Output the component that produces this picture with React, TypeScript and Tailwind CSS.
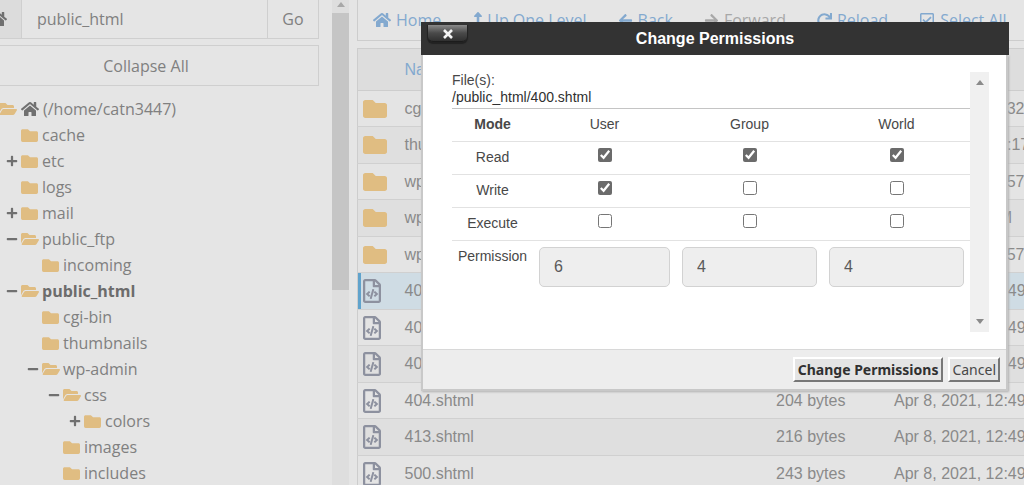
import { FaFolder, FaFolderOpen, FaHome, FaLevelUpAlt, FaArrowLeft, FaArrowRight, FaRedo, FaRegCheckSquare, FaRegFileCode, FaPlus, FaMinus } from "react-icons/fa";
import type { ReactNode } from "react";

const sans = "font-['Open_Sans',sans-serif]";
const arial = "font-['Liberation_Sans',sans-serif]";

type Node = { name: string; pad: string; open?: boolean; sign?: "+" | "-"; bold?: boolean };

const tree: Node[] = [
  { name: "cache", pad: "pl-[6px]" },
  { name: "etc", pad: "pl-[6px]", sign: "+" },
  { name: "logs", pad: "pl-[6px]" },
  { name: "mail", pad: "pl-[6px]", sign: "+" },
  { name: "public_ftp", pad: "pl-[6px]", sign: "-", open: true },
  { name: "incoming", pad: "pl-[27px]" },
  { name: "public_html", pad: "pl-[6px]", sign: "-", open: true, bold: true },
  { name: "cgi-bin", pad: "pl-[27px]" },
  { name: "thumbnails", pad: "pl-[27px]" },
  { name: "wp-admin", pad: "pl-[27px]", sign: "-", open: true },
  { name: "css", pad: "pl-[48px]", sign: "-", open: true },
  { name: "colors", pad: "pl-[69px]", sign: "+" },
  { name: "images", pad: "pl-[48px]" },
  { name: "includes", pad: "pl-[48px]" },
];

const files = [
  { name: "cgi-bin", size: "4 KB", date: "Apr 8, 2021, 11:32", dir: true },
  { name: "thumbnails", size: "4 KB", date: "Aug 8, 2021, 12:17", dir: true },
  { name: "wp-admin", size: "4 KB", date: "Apr 8, 2021, 11:57", dir: true },
  { name: "wp-content", size: "4 KB", date: "Today, 10:24 AM", dir: true },
  { name: "wp-includes", size: "4 KB", date: "Apr 8, 2021, 11:57", dir: true },
  { name: "400.shtml", size: "207 bytes", date: "Apr 8, 2021, 12:49", selected: true },
  { name: "401.shtml", size: "207 bytes", date: "Apr 8, 2021, 12:49" },
  { name: "403.shtml", size: "207 bytes", date: "Apr 8, 2021, 12:49" },
  { name: "404.shtml", size: "204 bytes", date: "Apr 8, 2021, 12:49" },
  { name: "413.shtml", size: "216 bytes", date: "Apr 8, 2021, 12:49" },
  { name: "500.shtml", size: "243 bytes", date: "Apr 8, 2021, 12:49" },
];

function TreeRow({ node }: { node: Node }) {
  return (
    <li className={`flex h-[26px] items-center ${node.pad}`}>
      <span className="flex w-[15px] shrink-0 text-[#707070]">
        {node.sign === "+" && <FaPlus size={12} />}
        {node.sign === "-" && <FaMinus size={12} />}
      </span>
      <span className="flex w-[21px] shrink-0 text-[#e0bd82]">
        {node.open ? <FaFolderOpen size={18} /> : <FaFolder size={17} />}
      </span>
      <span className={node.bold ? "font-bold text-[#6c6c6c]" : ""}>{node.name}</span>
    </li>
  );
}

function Sidebar() {
  return (
    <aside className={`w-[332px] shrink-0 text-[16px] text-[#808080] ${sans}`}>
      <div className="mr-[13px] flex h-[39px] border-b border-[#cfcfcf]">
        <span className="flex w-[22px] items-center border-r border-[#cfcfcf] bg-[#dcdcdc] text-[#707070]">
          <FaHome size={18} className="-ml-[11px]" />
        </span>
        <input aria-label="Path" defaultValue="public_html" className="min-w-0 flex-1 px-[15px] outline-none" />
        <button className="w-[52px] border-x border-[#cfcfcf]">Go</button>
      </div>
      <div className="mt-[6px] mr-[13px] flex h-[41px]">
        <button className="flex-1 border border-l-0 border-[#cfcfcf] pr-[26px]">Collapse All</button>
      </div>
      <div className="mt-[10px] flex h-[26px] items-center">
        <FaFolderOpen size={18} className="-ml-px text-[#e0bd82]" />
        <FaHome size={18} className="ml-[4px] text-[#707070]" />
        <span className="ml-[4px]">(/home/catn3447)</span>
      </div>
      <ul>
        {tree.map((n) => (
          <TreeRow key={n.name} node={n} />
        ))}
      </ul>
    </aside>
  );
}

function Tool({ icon, label, muted }: { icon: ReactNode; label: string; muted?: boolean }) {
  return (
    <button disabled={muted} className={`flex items-center gap-[5px] ${muted ? "text-[#a8a8a8]" : "text-[#83a9cf]"}`}>
      {icon}
      {label}
    </button>
  );
}

function FileTable() {
  return (
    <table className={`mt-[7px] w-full table-fixed border-l border-[#cdcdcd] text-[16px] whitespace-nowrap text-[#8a8a8a] ${arial}`}>
      <thead>
        <tr className="h-[42px] border-y border-[#cdcdcd] bg-[#dddddd]">
          <th className="w-[47px]" aria-label="Type" />
          <th className="pr-3 text-left font-normal text-[#83a9cf]">Name</th>
          <th className="w-[118px] text-left font-normal text-[#83a9cf]">Size</th>
          <th className="w-[130px] text-left font-normal text-[#83a9cf]">Last Modified</th>
        </tr>
      </thead>
      <tbody>
        {files.map((f, i) => (
          <tr
            key={f.name}
            className={`h-[36px] border-b border-[#d0d0d0] even:h-[37px] ${f.selected ? "bg-[#cfdce4]" : i % 2 ? "bg-[#dfdfdf]" : "bg-[#e4e4e4]"}`}
          >
            <td className={`pl-[5px] ${f.selected ? "shadow-[inset_3px_0_0_#60a3cc]" : ""}`}>
              {f.dir ? <FaFolder size={24} className="text-[#e0bd82]" /> : <FaRegFileCode className="h-[24px] w-[18px] text-[#8d919f]" />}
            </td>
            <td>{f.name}</td>
            <td>{f.size}</td>
            <td>{f.date}</td>
          </tr>
        ))}
      </tbody>
    </table>
  );
}

const modes = [
  { name: "Read", on: [true, true, true] },
  { name: "Write", on: [true, false, false] },
  { name: "Execute", on: [false, false, false] },
];
const groups = ["User", "Group", "World"];

function Dialog() {
  return (
    <section
      role="dialog"
      aria-labelledby="dialog-title"
      className={`absolute top-[22px] right-[15px] left-[421px] ${arial} text-[14px] text-[#484848]`}
    >
      <header className="relative flex h-[33px] items-center justify-center bg-[#333333]">
        <button
          aria-label="Close"
          className="absolute top-[3px] left-[7px] flex h-[17px] w-[39px] justify-center rounded-b-[5px] border-b border-[#1c1c1c] bg-linear-to-b from-[#8a8a8a] via-[#4a4a4a] to-[#303030] shadow-[0_1px_1px_1px_#222222]"
        >
          <svg viewBox="0 0 10 10" className="mt-[4px] size-[10px]" stroke="#f4f4f4" strokeWidth="2.6">
            <path d="M1 1 9 9M9 1 1 9" />
          </svg>
        </button>
        <h2 id="dialog-title" className="text-[16px] font-bold text-white">Change Permissions</h2>
      </header>
      <div className="mr-px border-x-2 border-b-2 border-[#c8c8c8] bg-white shadow-[1px_1px_2px_#b0b0b0]">
        <div className="flex h-[294px] pt-[17px] pr-[17px] pl-[29px]">
          <div className="min-w-0 flex-1">
            <p className="leading-[17px]">File(s):</p>
            <p className="leading-[17px] text-[#303030]">/public_html/400.shtml</p>
            <table className="mt-[2px] w-full table-fixed text-center">
              <thead>
                <tr className="h-[33px] border-t border-b border-t-[#c4c4c4] border-b-[#e2e2e2]">
                  <th className="w-[81px] pb-[2px]">Mode</th>
                  <th className="w-[143px] pb-[2px] font-normal">User</th>
                  <th className="pb-[2px] font-normal">Group</th>
                  <th className="pb-[2px] font-normal">World</th>
                </tr>
              </thead>
              <tbody>
                {modes.map((m) => (
                  <tr key={m.name} className="h-[33px] border-b border-[#e2e2e2]">
                    <th className="pb-[2px] font-normal">{m.name}</th>
                    {m.on.map((on, i) => (
                      <td key={groups[i]} className="pb-[6px]">
                        <input type="checkbox" aria-label={`${groups[i]} ${m.name}`} defaultChecked={on} className="mx-auto block size-[14px] accent-[#6b6b6b]" />
                      </td>
                    ))}
                  </tr>
                ))}
                <tr className="align-top">
                  <th className="pt-[5px] font-normal">Permission</th>
                  {["6", "4", "4"].map((v, i) => (
                    <td key={groups[i]} className="px-[6px] pt-[6px]">
                      <input
                        aria-label={`${groups[i]} permission`}
                        readOnly
                        defaultValue={v}
                        className="block h-[40px] w-full rounded-[5px] border border-[#d2d2d2] bg-[#eeeeee] px-[14px] text-[16px] text-[#5a5a5a]"
                      />
                    </td>
                  ))}
                </tr>
              </tbody>
            </table>
          </div>
          <div className="flex h-[260px] w-[19px] flex-col items-center justify-between bg-[#f0f0f0] py-[8px]">
            <svg viewBox="0 0 8 5" className="h-[5px] w-[8px]" fill="#8a8a8a"><path d="M0 5 4 0 8 5Z" /></svg>
            <svg viewBox="0 0 8 5" className="h-[5px] w-[8px]" fill="#8a8a8a"><path d="M0 0 4 5 8 0Z" /></svg>
          </div>
        </div>
        <footer className="flex h-[40px] items-center justify-end gap-[5px] border-t border-[#d8d8d8] bg-[#ededed] pr-[6px] font-['Noto_Sans',sans-serif] text-[14px]">
          <button className="h-[25px] border-2 border-t-white border-r-[#777777] border-b-[#777777] border-l-white bg-[#e4e4e4] px-[3px] leading-[20px] font-bold text-[#303030]">Change Permissions</button>
          <button className="h-[25px] border-2 border-t-white border-r-[#777777] border-b-[#777777] border-l-white bg-[#e4e4e4] px-[2px] leading-[20px]">Cancel</button>
        </footer>
      </div>
    </section>
  );
}

export default function App() {
  return (
    <div className="relative flex h-screen overflow-hidden bg-[#e5e5e5]">
      <Sidebar />
      <div className="flex w-[17px] shrink-0 flex-col bg-[#dedede]">
        <div className="flex h-[13px] items-start justify-center pt-[2px]">
          <svg viewBox="0 0 8 5" className="h-[5px] w-[8px]" fill="#a8a8a8"><path d="M0 5 4 0 8 5Z" /></svg>
        </div>
        <div className="h-[277px] bg-[#c5c5c5]" />
      </div>
      <main className="ml-[8px] min-w-0 flex-1">
        <nav className={`flex h-[41px] items-center gap-[31px] border-b border-l border-[#cdcdcd] pl-[15px] text-[16px] whitespace-nowrap ${sans}`}>
          <Tool icon={<FaHome size={18} />} label="Home" />
          <Tool icon={<FaLevelUpAlt className="h-[16px] w-[10px]" />} label="Up One Level" />
          <Tool icon={<FaArrowLeft size={15} />} label="Back" />
          <Tool icon={<FaArrowRight size={15} />} label="Forward" muted />
          <Tool icon={<FaRedo size={15} />} label="Reload" />
          <Tool icon={<FaRegCheckSquare size={16} />} label="Select All" />
        </nav>
        <FileTable />
      </main>
      <Dialog />
    </div>
  );
}
